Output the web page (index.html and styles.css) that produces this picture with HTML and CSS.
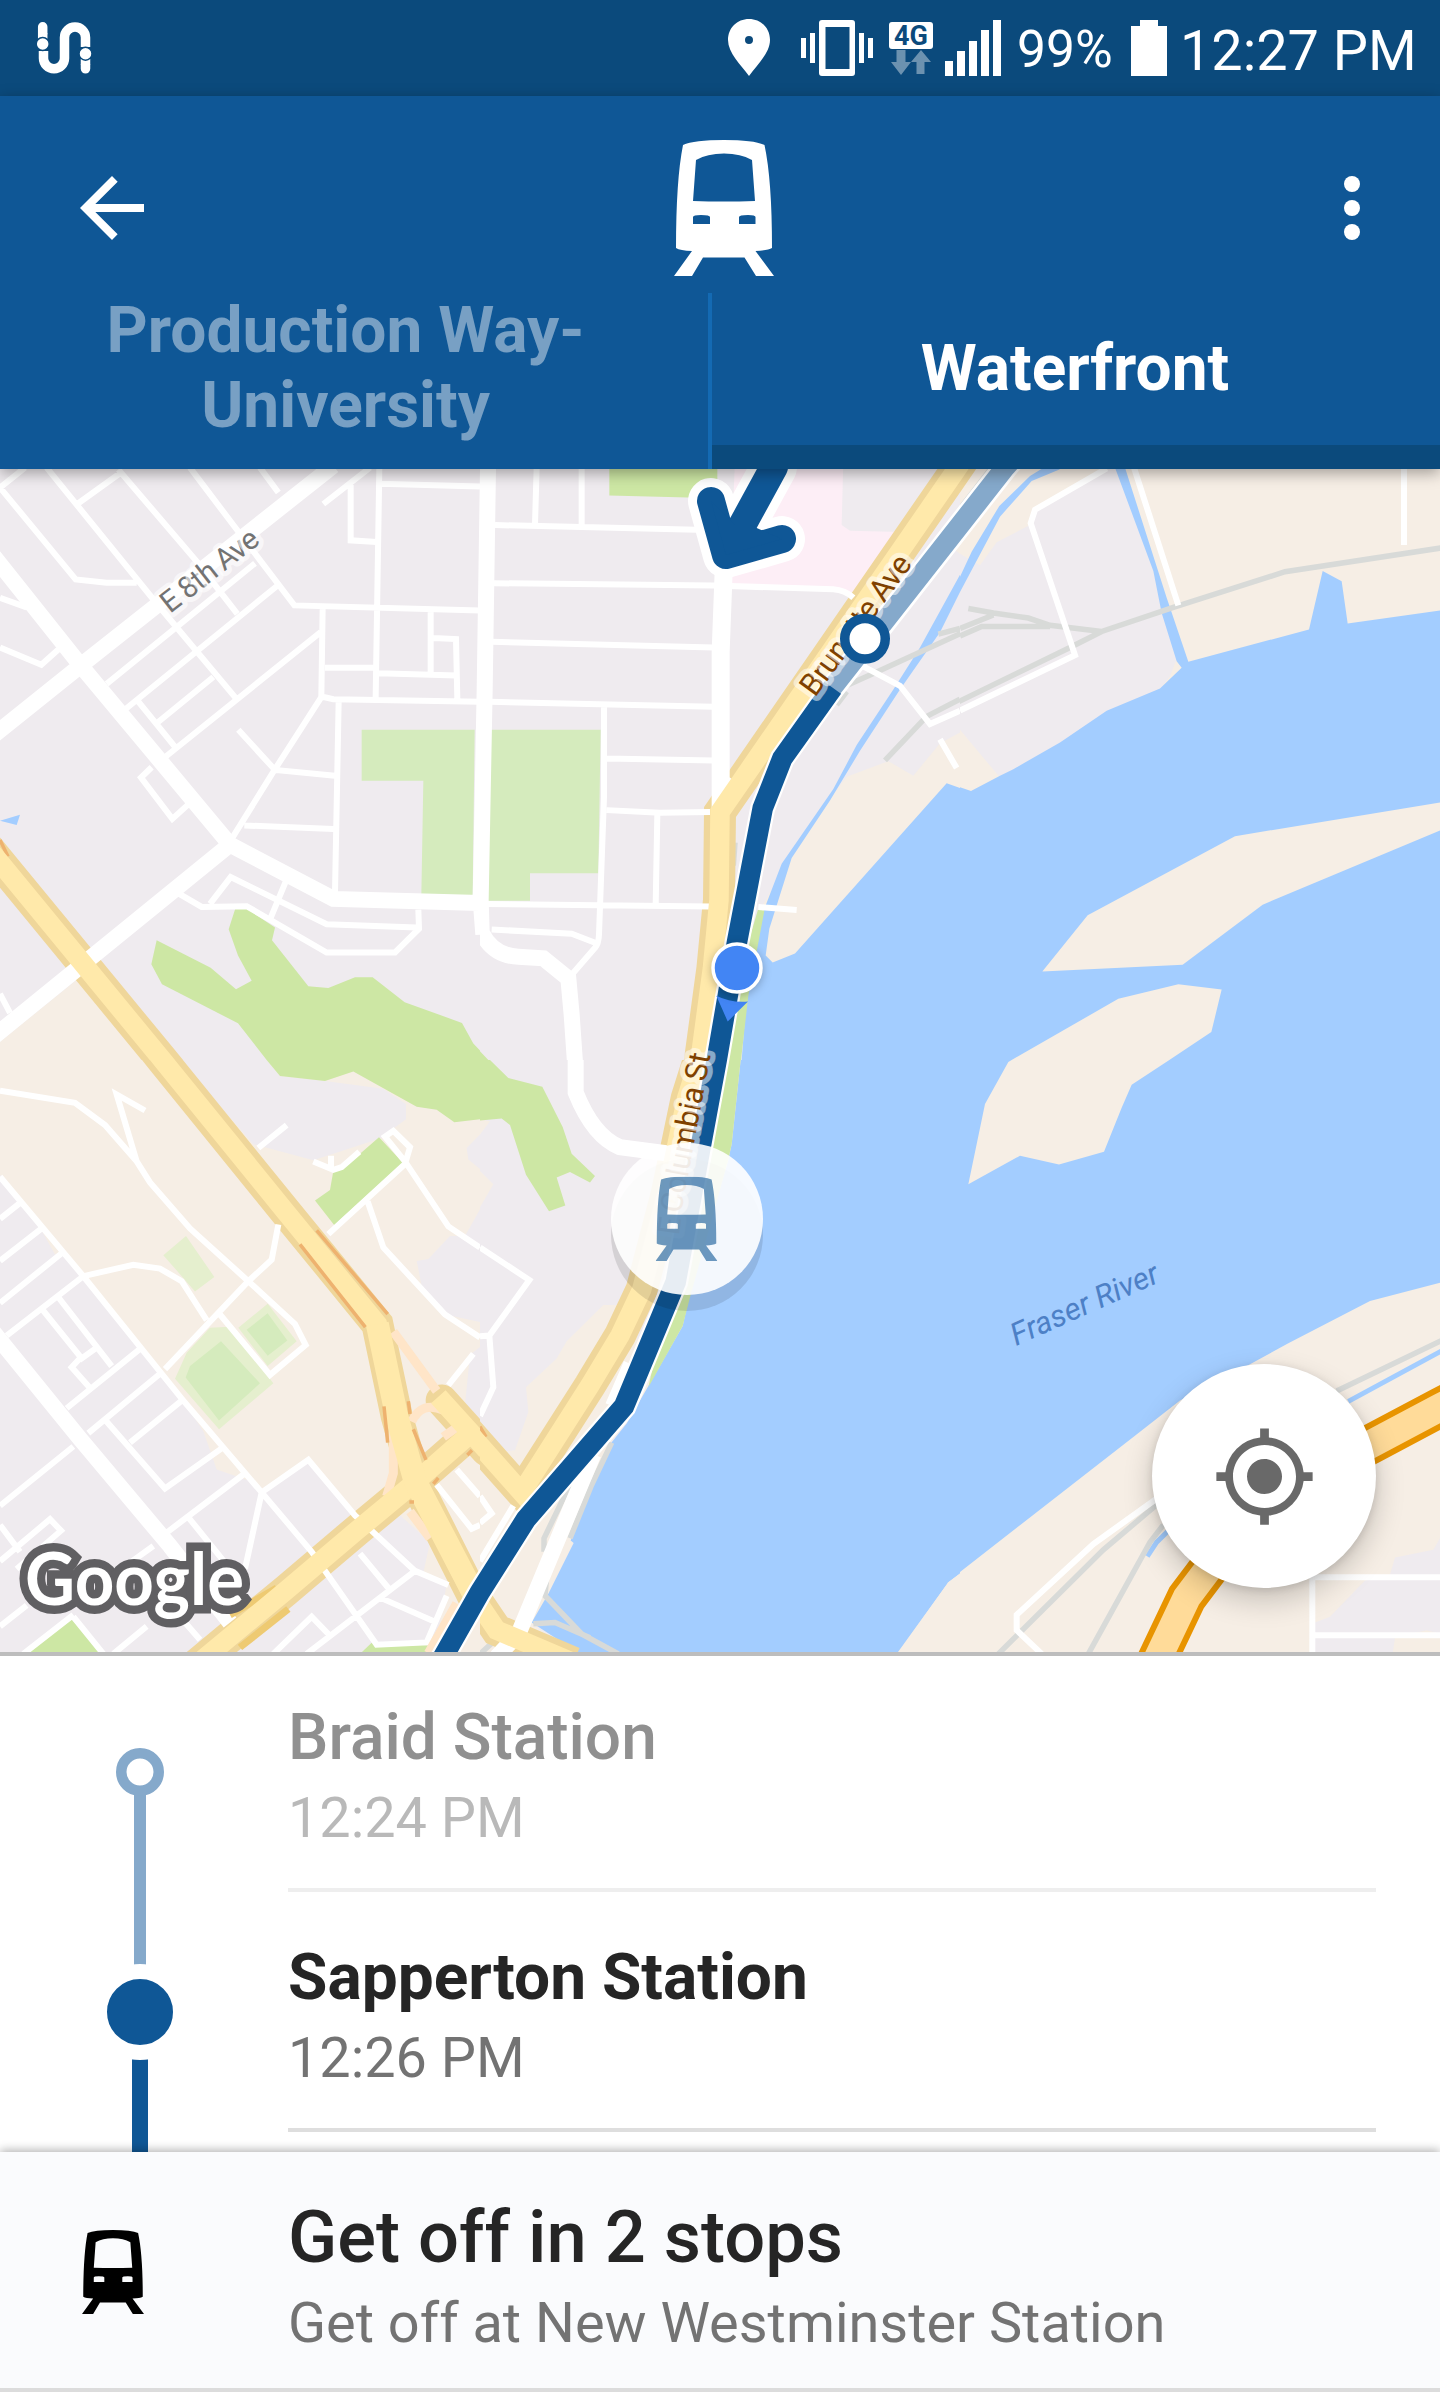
FILE: index.html
```html
<!DOCTYPE html>
<html lang="en">
<head>
<meta charset="utf-8">
<title>Waterfront trip</title>
<link rel="stylesheet" href="styles.css">
</head>
<body>
<svg class="defs" width="0" height="0" aria-hidden="true">
  <symbol id="train" viewBox="0 0 100 136" preserveAspectRatio="none">
    <path fill-rule="evenodd" d="M9 5Q20 0 50 0Q80 0 90.500 5Q98 40 98 108Q94 110.500 81.500 111L100 136H82L70.500 117.500H29L18 136H0L18 111Q6 110.500 2 108Q2 40 9 5ZM22 20Q33 13.500 50 13.500Q67 13.500 78 20L81 61Q50 62 19 61ZM19 77Q19 75 27 75Q36 75 36 77V84H19ZM65 77Q65 75 74 75Q81.500 75 81.500 77V84H65Z"/>
  </symbol>
</svg>

<div class="status-bar">
  <svg class="app-mark" width="56" height="54" viewBox="0 0 56 54">
    <g fill="none" stroke="#fff" stroke-width="9.500">
      <path stroke-linecap="round" d="M6.700 5.800V12M49.500 44V47.800"/>
      <path d="M6.700 12V18M7.500 30V37.200a10.500 10.500 0 0 0 21 0V16.500a10.500 10.500 0 0 1 21 0V26M49.500 38V44"/>
    </g>
    <circle cx="6.700" cy="23" r="6.500" fill="#fff" stroke="#0b4a7c" stroke-width="1.500"/>
    <circle cx="49.500" cy="32.700" r="6.500" fill="#fff" stroke="#0b4a7c" stroke-width="1.500"/>
  </svg>
  <div class="status-icons">
    <svg class="pin" width="42" height="57" viewBox="0 0 42 57"><path fill="#fff" fill-rule="evenodd" d="M21 0C9 0 0 9 0 21c0 13 13 25 21 36c8-11 21-23 21-36C42 9 33 0 21 0zM21 17a4 4 0 1 1 0 8a4 4 0 0 1 0-8z"/></svg>
    <svg class="vibrate" width="72" height="56" viewBox="0 0 72 56" fill="#fff"><path fill-rule="evenodd" d="M21 0H51Q54 0 54 3V53Q54 56 51 56H21Q18 56 18 53V3Q18 0 21 0ZM24.500 7V49H48.500V7Z"/><path d="M0 18h5v20H0zM9 13h5v30H9zM58 13h5v30h-5zM67 18h5v20h-5z"/></svg>
    <div class="network">
      <span class="network-type">4G</span>
      <svg width="40" height="25" viewBox="0 0 40 25" fill="#6c92b0"><path d="M5.500 0h9v12h5.500L10 25L0 12h5.500zM25.500 24h8V12h6.500L30 0L20 12h5.500z"/></svg>
    </div>
    <svg class="signal" width="56" height="56" viewBox="0 0 56 56" fill="#fff"><path d="M0 41h8v15H0zM12 31h8v25h-8zM24 21h8v35h-8zM36 10h8v46h-8zM48 0h8v56h-8z"/></svg>
    <span class="battery-level">99%</span>
    <svg class="battery" width="36" height="56" viewBox="0 0 36 56" fill="#fff"><path d="M9 0h18v6h9v50H0V6h9z"/></svg>
    <span class="clock">12:27 PM</span>
  </div>
</div>

<header class="header">
  <div class="toolbar">
    <svg width="96" height="96" viewBox="0 0 24 24" fill="#fff"><path d="M20 11H7.830l5.590-5.590L12 4l-8 8 8 8 1.410-1.410L7.830 13H20v-2z"/></svg>
    <svg class="toolbar-train" width="100" height="136" fill="#fff"><use href="#train"/></svg>
    <svg width="96" height="96" viewBox="0 0 24 24" fill="#fff"><circle cx="12" cy="6" r="2"/><circle cx="12" cy="12" r="2"/><circle cx="12" cy="18" r="2"/></svg>
  </div>
  <nav class="tabs">
    <div class="tab">Production Way-<br>University</div>
    <div class="tab tab-active">Waterfront</div>
  </nav>
</header>

<main class="map">
<svg class="map-canvas" width="1440" height="1183" viewBox="0 469 1440 1183">
  <!-- north-west tile -->
  <svg x="0" y="460" width="480" height="600" viewBox="0 0 1440 1568" preserveAspectRatio="none">
    <rect class="land" width="1440" height="1568"/>
    <path class="sand" d="M0 1520L235 1355L440 1568H0Z"/>
    <path class="park" d="M470 1255L632 1327L708 1383L755 1361L714 1295L686 1226L706 1172H740L825 1222L816 1255L925 1375L985 1380L1065 1352H1118L1214 1417L1386 1471L1420 1525L1440 1543V1568H800L714 1472L486 1370L454 1318Z"/>
    <path class="lawn" d="M1085 705H1424L1418 1137H1264L1270 838H1085Z"/>
    <path class="water" d="M0 943L60 927L50 954Z"/>
    <path class="casing" d="M-57 992L487 1568L540 1624"/>
    <path class="amber" d="M0 993L24 1036"/>
    <path class="minor" d="M0 72L75 20M0 72L227 312L320 321H410M140 20L470 375L710 625M235 113L358 36M355 25L590 265L712 402M570 20L700 170L883 380L1440 393M780 20L835 85M970 115L1110 20M1052 55V210L1130 214M1138 20L1127 620M1140 62L1440 69M968 385L964 620M964 618L1000 625L1440 632M975 543H1120M1135 557L1370 563M1292 395V555M1300 465L1368 468L1372 625M320 585L765 270M375 652L830 330M470 688L640 567M412 628L525 750M490 780L962 450M964 620L825 808L695 990M715 705L825 810L1005 825M1016 630L1005 1130M733 955L1000 964M455 803L423 830L517 938L565 900M0 360L80 385M0 490L124 535L175 495M530 1130L605 1168L740 1166L980 1287H1185L1257 1225L1255 1175M630 1160L692 1090L980 1213L1250 1222M858 1100L808 1205M0 1395L30 1445"/>
    <path class="major" d="M-30 727L245 535L1000 15M-20 250L245 540L690 1005L1000 1147L1440 1158M690 1005L-30 1515M1464 20L1454 600L1442 1150L1450 1240"/>
    <path class="arterial" d="M-57 992L487 1568L540 1624"/>
  </svg>
  <!-- north tile -->
  <svg x="480" y="460" width="480" height="600" viewBox="0 0 1440 1568" preserveAspectRatio="none">
    <rect class="land" width="1440" height="1568"/>
    <path class="park" d="M388 0H712V100L388 93ZM0 1545L25 1568H0Z"/>
    <path class="hospital" d="M765 0H1090L1085 170L1110 185L1265 188L1130 350L750 322Z"/>
    <path class="sand" d="M1440 860V712L1380 740L1300 825L1225 787L1100 828L1000 940L850 1160V1330H960ZM1440 180L1425 235L1440 245Z"/>
    <path class="water" d="M1440 857L1400 845L945 1290L878 1313L857 1295L868 1225L935 1040L1050 890L1140 760L1260 600L1380 450L1440 345V300L1320 490L1240 600L1130 745L1060 860L905 1055L850 1180L800 1400L785 1568H1440Z"/>
    <path class="park" d="M835 1172L853 1178L805 1400L783 1568H700Z"/>
    <path class="lawn" d="M32 705H362L355 1080H150V1152H22Z"/>
    <path class="rail" d="M1445 452L1200 550L1060 605M1375 455L1440 440M1215 785L1340 670L1440 625M1100 605L1070 640M1450 135L1280 350M765 1000L760 1060"/>
    <path class="casing" d="M1500 -65L1433 20L815 800L720 920L717 1150L697 1330L660 1568L650 1630"/>
    <path class="minor" d="M45 170L650 182M170 20L165 168M305 20V168M40 322L700 328L1060 338Q1095 340 1120 360M35 475L700 490M30 632L700 645M372 645V880L357 1240Q356 1265 345 1275L275 1345M380 780L700 785M380 915L540 922L690 920M532 925L527 1165M20 1160L690 1167M35 1227L275 1238L355 1265M835 1168L950 1176M1140 535L1260 590L1350 690L1440 655M1380 730L1430 805"/>
    <path class="major" d="M24 20L14 600L2 1150L5 1235Q40 1296 115 1298L190 1302L265 1355L275 1450L287 1600"/>
    <path class="major wide" d="M731 290L722 500V890L765 840"/>
    <path class="arterial" d="M1500 -65L1433 20L815 800L720 920L717 1150L697 1330L660 1568L650 1630"/>
  </svg>
  <!-- north-east tile -->
  <svg x="960" y="460" width="480" height="600" viewBox="0 0 1440 1568" preserveAspectRatio="none">
    <rect class="sand" width="1440" height="1568"/>
    <path class="land" d="M0 245L60 275L110 215L205 172L225 130L440 20H470L580 290L605 390L650 520L630 565L600 600L450 655L300 745L120 830L0 705Z"/>
    <path class="water" d="M0 855L33 865L120 825L160 808L300 738L440 655L600 597L665 543L650 526L605 400L580 290L465 20L495 20L620 360L685 527L1047 443L1088 290L1145 317L1163 427L1440 393V1568H0Z"/>
    <path class="sand" d="M247 1337L383 1190L825 983L1440 895V968L908 1162L668 1319ZM155 1568L475 1408L655 1370L785 1384L754 1495L628 1568Z"/>
    <path class="water" d="M260 15L210 42L118 120L35 240L0 305V345L120 148L215 55L300 24Z"/>
    <path class="rail" d="M1450 229L975 292L640 385L425 448L330 490L-10 634M25 388L100 400L205 413L270 432L425 448M0 440L100 405M0 460L65 435H270M95 20L-20 150"/>
    <path class="minor" d="M440 22L225 130L212 165L345 510L0 655M522 20L655 380M1332 20V222"/>
    <path class="casing" d="M60 -65L-7 20L-100 138"/>
    <path class="arterial" d="M60 -65L-7 20L-100 138"/>
  </svg>
  <!-- south-west tile -->
  <svg x="0" y="1060" width="480" height="600" viewBox="0 0 1440 1568" preserveAspectRatio="none">
    <rect class="sand" width="1440" height="1568"/>
    <path class="land" d="M540 0H800L840 42L975 55L1150 75L1218 115V155L1140 205L940 262L760 220ZM0 300L250 565L545 885L610 970L650 1070L750 1100L785 1130L925 1045L1080 1200L1200 1190L1290 1260L1270 1340L1340 1370L1300 1568H0ZM1440 195L1400 230L1405 260L1440 285ZM1440 390L1395 460H1350L1285 520L1250 525L1265 590L1335 665L1440 685ZM1440 750L1410 770L1395 900L1440 960Z"/>
    <path class="sand" d="M120 438L165 508L185 500Z"/>
    <path class="park" d="M800 0L840 42L975 55L1060 30L1250 122L1310 130L1363 163L1440 155V0ZM945 367L990 340L1000 290L1025 287L1137 202L1208 268L1003 432ZM80 1552L212 1458L305 1552ZM1080 1552L1115 1523L1300 1530L1260 1568H1080Z"/>
    <path class="field" d="M490 510L558 460L643 567L585 605ZM715 700L803 637L890 735L803 800ZM525 833L560 765L630 700L690 697L820 845L657 965Z"/>
    <path class="lawn" d="M740 705L803 662L862 733L803 773ZM557 830L570 800L663 735L780 845L657 942Z"/>
    <path class="casing" d="M460 -30L487 0L860 400L1132 690L1190 930L1245 1100L1430 1420M590 1580L860 1385L1070 1230L1250 1100L1400 985"/>
    <path class="casing" stroke-linecap="round" d="M1325 890L1460 1020"/>
    <path class="minor" d="M0 80L225 112L315 170L410 265L450 320L570 440L745 578L885 690L917 745L810 823L660 665M435 132L350 90L410 265M0 305L250 565L545 885L785 1130L935 1285L1130 1528L1280 1522L1340 1400M785 1130L925 1045L1065 1190L1245 1335L1345 1372M1080 1290L1170 1385M785 1130L735 1330M0 415L65 370M0 525L125 440M0 635L185 505M20 720L250 565L400 535L480 545L545 578L620 680M495 808L745 578L815 522L835 430M175 620L335 800M125 650L245 780L285 755M245 775L215 803L268 855M200 910L420 755M265 975L480 820M315 940L495 1120L665 1015M390 1000L545 890M500 1235L735 1080M565 1195L690 1330M0 1165L220 1010M0 1215L60 1285M0 1310L150 1200L183 1230L50 1330M340 1552L440 1480M310 1552L220 1455M380 1320L460 1270M0 1480L80 1425M70 1552L220 1450M775 230L860 170M940 265L1000 287L1025 280L1078 240M993 250V285M985 455L1215 272L1230 228L1180 185L1155 200L1215 265L1345 435L1440 490M1103 370L1150 490L1335 665L1440 725M1420 768L1345 850M1370 1070L1440 1140M1310 1110L1415 1225L1440 1215M1245 1335L920 1552M1140 1405L1310 1470M820 1552L935 1455L985 1500M550 1465L600 1515"/>
    <path class="major" d="M-30 700L240 990L510 1270L690 1470"/>
    <path class="ramp" d="M1180 710L1310 865M1235 945Q1265 890 1330 915M1330 985L1370 960M1180 960V1080L1160 1140M1230 1180L1290 1250M1370 1420L1285 1550"/>
    <path class="gold" d="M690 1450L830 1380M720 1535L865 1435"/>
    <path class="arterial" d="M460 -30L487 0L860 400L1132 690L1190 930L1245 1100L1430 1420M590 1580L860 1385L1070 1230L1250 1100L1400 985M1315 880L1460 1020"/>
    <path class="arterial wide" d="M1132 690L1190 930L1245 1100L1430 1410"/>
    <path class="amber" d="M900 482L1096 698M950 445L1163 664M1152 905L1163 1000M1225 892L1230 925M1240 965L1278 1045M1300 1108L1315 1092M1402 1032L1416 1020M1228 1155H1242"/>
  </svg>
  <!-- south tile -->
  <svg x="480" y="1060" width="480" height="600" viewBox="0 0 1440 1568" preserveAspectRatio="none">
    <rect class="land" width="1440" height="1568"/>
    <path class="sand" d="M0 1568V1030L105 1020L145 920L138 855L230 780L260 735L370 640H440L520 860L390 1000L275 1250L280 1262L160 1475L300 1568ZM0 195L30 160L0 155ZM0 290L40 325L0 385Z"/>
    <path class="water" d="M782 0L755 220L745 260L630 610L608 695L500 860L440 950L390 1005L272 1256L281 1262L205 1395L155 1470L300 1552H1252L1405 1365L1440 1342V0Z"/>
    <path class="sand" d="M1250 1552L1405 1365L1440 1342V1568Z"/>
    <path class="park" d="M700 0H782L755 220L745 260L630 620L608 695L505 855L560 640ZM0 0H30L85 47L187 70L248 175L275 245L345 303L330 320L270 293L230 307L256 380L207 395L138 300L90 170L65 153L0 158Z"/>
    <path class="rail" d="M192 1285V1250L270 1110M395 1000L335 1110L270 1250M200 1350L195 1400L305 1500L415 1552M160 1473L225 1470L330 1510M0 1552L60 1505"/>
    <path class="casing" d="M-40 968L125 1130L330 850L420 720L485 600L560 350L620 100L660 -10M-20 1400L50 1490L280 1575"/>
    <path class="amber" d="M605 80L570 225M465 610L430 695M0 958L18 985"/>
    <path class="minor" d="M0 490L148 575L28 720L0 722M28 720L40 855L0 930M0 1140L35 1185L0 1210M385 900L440 790M0 1310L100 1165"/>
    <path class="major" d="M287 -10V85Q340 200 420 228L570 245M50 1560L115 1500L225 1270L340 1030"/>
    <path class="arterial" d="M-40 968L125 1130L330 850L420 720L485 600L560 350L620 100L660 -10M-20 1400L50 1490L280 1575"/>
  </svg>
  <!-- south-east tile -->
  <svg x="960" y="1060" width="480" height="600" viewBox="0 0 1440 1568" preserveAspectRatio="none">
    <rect class="sand" width="1440" height="1568"/>
    <path class="water" d="M0 0H1440V582L1230 630L985 740L870 795L660 890L520 985L0 1338Z"/>
    <path class="sand" d="M145 5L155 0H628L515 65L485 125L432 240L297 273L180 250L25 325L75 115Z"/>
    <path class="land" d="M1440 1250L1420 1280L1305 1300L1290 1345L1215 1360L1110 1455L1065 1470V1568H1295L1305 1510L1400 1490L1440 1500Z"/>
    <path class="stream" d="M1445 760L1165 892M625 1230L590 1260L562 1297"/>
    <path class="rail" d="M1445 733L1130 865M600 1155L430 1280L115 1552M610 1215L570 1260L385 1552"/>
    <path class="minor" d="M600 1140L400 1265L170 1450V1490L245 1552M1057 1552V1352H1440M1065 1503H1440"/>
    <path class="highway-casing" d="M1500 882L1440 908L1230 1005L950 1130L745 1330L680 1405L590 1570"/>
    <path class="highway" d="M1500 882L1440 908L1230 1005L950 1130L745 1330L680 1405L590 1570"/>
  </svg>

  <!-- travelled and remaining route -->
  <g class="route">
    <path class="route-edge" d="M1040 428L1005 467.700L832.700 687.700L782.300 758.500L762.700 808.200L737 942L716.700 1060L675.700 1282L624 1406.300L526 1519.200L480 1592L438 1666"/>
    <path class="route-past" d="M1040 428L1005 467.700L825 697"/>
    <path class="route-line" d="M832.700 687.700L782.300 758.500L762.700 808.200L737 942L716.700 1060L675.700 1282L624 1406.300L526 1519.200L480 1592L438 1666"/>
  </g>

  <g class="street-label">
    <text class="label-gray" transform="translate(170 614) rotate(-38)" textLength="116" font-size="30">E 8th Ave</text>
    <text class="label-brown" transform="translate(815 698) rotate(-53.800)" textLength="166" font-size="31">Brunette Ave</text>
    <text class="label-brown" transform="translate(681 1214) rotate(-79.500)" textLength="162" font-size="31">Columbia St</text>
    <text class="label-brown" transform="translate(679 1236) rotate(-82)" font-size="31">E</text>
    <text class="label-river" transform="translate(1016 1346) rotate(-24)" textLength="159" font-size="31">Fraser River</text>
  </g>

  <g class="heading">
    <path class="heading-edge" d="M774 467L726 555M711 501L726 555L782 539"/>
    <path class="heading-line" d="M774 467L726 555M711 501L726 555L782 539"/>
    <path class="heading-fill" d="M711 501L726 555L782 539L750 525L735 525Z"/>
  </g>

  <circle class="stop-ring" cx="865" cy="638.700" r="20.250"/>
  <path fill="#4285f4" d="M716.300 995.700Q731 1003 748 1001.500L727.700 1021.500Z"/>
  <circle class="me" cx="737" cy="968" r="24"/>

  <g>
    <circle cx="687" cy="1235" r="76" fill="#000" opacity=".11"/>
    <circle cx="687" cy="1219" r="76" fill="#fff" opacity=".9"/>
    <svg x="655.500" y="1176.500" width="62" height="84.500" class="vehicle"><use href="#train"/></svg>
  </g>

  <text class="google" x="25" y="1605" textLength="219" lengthAdjust="spacingAndGlyphs">Google</text>
</svg>
<button class="locate" aria-label="My location">
  <svg width="105" height="105" viewBox="0 0 24 24" fill="#696969"><path d="M12 8c-2.210 0-4 1.790-4 4s1.790 4 4 4 4-1.790 4-4-1.790-4-4-4zm8.940 3A8.994 8.994 0 0 0 13 3.060V1h-2v2.060A8.994 8.994 0 0 0 3.060 11H1v2h2.060A8.994 8.994 0 0 0 11 20.940V23h2v-2.060A8.994 8.994 0 0 0 20.940 13H23v-2h-2.060zM12 19.200c-3.980 0-7.200-3.220-7.200-7.200s3.220-7.200 7.200-7.200 7.200 3.220 7.200 7.200-3.220 7.200-7.200 7.200z"/></svg>
</button>
</main>

<section class="stops">
  <div class="stop stop-past">
    <svg class="rail-col" width="288" height="236"><path d="M140 130V236" stroke="#85a9cb" stroke-width="12"/><circle cx="140" cy="116" r="18.750" fill="#fff" stroke="#85a9cb" stroke-width="10.500"/></svg>
    <div class="stop-body"><div class="stop-name">Braid Station</div><div class="stop-time">12:24 PM</div></div>
  </div>
  <div class="stop stop-current">
    <svg class="rail-col" width="288" height="240"><path d="M140 0V80" stroke="#85a9cb" stroke-width="12"/><path d="M140 160V240" stroke="#0f5796" stroke-width="16"/><circle cx="140" cy="120" r="40.500" fill="#0f5796" stroke="#fff" stroke-width="15"/></svg>
    <div class="stop-body"><div class="stop-name">Sapperton Station</div><div class="stop-time">12:26 PM</div></div>
  </div>
  <div class="stop stop-next">
    <svg class="rail-col" width="288" height="20"><path d="M140 0V20" stroke="#0f5796" stroke-width="16"/></svg>
  </div>
</section>

<footer class="notice">
  <div class="notice-icon"><svg width="62" height="84"><use href="#train"/></svg></div>
  <div class="notice-text">
    <div class="notice-title">Get off in 2 stops</div>
    <div class="notice-sub">Get off at New Westminster Station</div>
  </div>
</footer>
</body>
</html>
```
FILE: styles.css
```css
* { box-sizing: border-box; }
body {
  margin: 0;
  width: 1440px;
  height: 2392px;
  display: flex;
  flex-direction: column;
  overflow: hidden;
  background: #fff;
  font-family: Roboto, "Liberation Sans", sans-serif;
}
svg { display: block; flex: none; }
.defs { position: absolute; }

.status-bar {
  height: 96px;
  flex: none;
  display: flex;
  justify-content: space-between;
  padding: 0 26px 0 36px;
  background: #0b4a7c;
  color: #fff;
}
.app-mark { margin-top: 21px; }
.status-icons { display: flex; align-items: flex-start; }
.pin { margin: 19px 31px 0 0; }
.vibrate { margin: 20px 16px 0 0; }
.network { width: 44px; margin: 22px 12px 0 0; }
.network-type {
  display: block;
  height: 27px;
  border-radius: 3px;
  background: #fff;
  color: #0b4a7c;
  font-size: 27px;
  font-weight: 700;
  line-height: 28px;
  text-align: center;
}
.network svg { margin: 1px 0 0 2px; }
.signal { margin: 20px 16px 0 0; }
.battery-level { width: 96px; margin-right: 18px; font-size: 51.5px; line-height: 60px; padding-top: 20px; }
.battery { margin-top: 20px; }
.clock { width: 247px; padding: 19px 0 0 13px; font-size: 55.8px; line-height: 64px; white-space: nowrap; }

.header {
  position: relative;
  z-index: 2;
  height: 373px;
  flex: none;
  background: #0f5796;
  box-shadow: 0 4px 14px rgba(0, 0, 0, .35);
}
.toolbar {
  display: flex;
  align-items: center;
  justify-content: space-between;
  padding: 44px 40px 17px 64px;
}
.toolbar-train { margin-right: 16px; }
.tabs { display: flex; height: 176px; font-size: 64px; font-weight: 700; line-height: 75px; text-align: center; }
.tab {
  width: 712px;
  padding-right: 17px;
  border-right: 4px solid #146ab3;
  color: #78a0c4;
}
.tab-active {
  width: 728px;
  padding: 38px 2px 0 0;
  border-right: 0;
  border-bottom: 24px solid #0b4a7c;
  color: #fff;
}

.map { position: relative; height: 1187px; flex: none; border-bottom: 4px solid #bdbdbd; }
.land { fill: #efebef; }
.sand { fill: #f6eee5; }
.water { fill: #a3cdff; }
.park { fill: #cde7a4; }
.lawn { fill: #d5ebbd; }
.field { fill: #e5efce; }
.hospital { fill: #fdeef6; }
.casing, .arterial, .minor, .major, .rail, .amber, .gold, .ramp, .stream, .highway, .highway-casing {
  fill: none;
  vector-effect: non-scaling-stroke;
}
.minor { stroke: #fff; stroke-width: 6px; }
.major { stroke: #fff; stroke-width: 16px; }
.major.wide { stroke-width: 18px; }
.rail { stroke: #d8dad8; stroke-width: 5.5px; }
.stream { stroke: #a3cdff; stroke-width: 5px; }
.casing { stroke: #efd69a; stroke-width: 32px; }
.arterial { stroke: #ffe9aa; stroke-width: 19.5px; }
.arterial.wide { stroke-width: 23px; }
.amber { stroke: #eeb26f; stroke-width: 3.5px; }
.gold { stroke: #eeca72; stroke-width: 7px; }
.ramp { stroke: #ffe5c8; stroke-width: 9px; }
.highway-casing { stroke: #e89400; stroke-width: 40px; }
.highway { stroke: #ffdb99; stroke-width: 28px; }
.route path { fill: none; }
.route-edge { stroke: #fff; stroke-width: 25px; }
.route-past { stroke: #85a9cb; stroke-width: 20px; }
.route-line { stroke: #0f5796; stroke-width: 20.5px; }
.heading path { fill: none; stroke-linecap: round; stroke-linejoin: round; }
.heading-edge { stroke: #fff; stroke-width: 46px; }
.heading-line { stroke: #0f5796; stroke-width: 28px; }
.heading .heading-fill { fill: #0f5796; }
.street-label text { paint-order: stroke; stroke-linejoin: round; stroke-width: 10px; }
.label-gray { fill: #737373; stroke: rgba(255, 255, 255, .6); }
.label-brown { fill: #7f4100; stroke: rgba(255, 255, 255, .5); }
.street-label .label-river { fill: #4d80c6; stroke: none; font-style: italic; }
.stop-ring { fill: #fff; stroke: #0f5796; stroke-width: 9.5px; }
.me { fill: #4285f4; stroke: #fff; stroke-width: 3.5px; filter: drop-shadow(0 2px 4px rgba(0, 0, 0, .25)); }
.vehicle { fill: #0f5796; opacity: .6; }
.google {
  font: 700 72px Lato, sans-serif;
  fill: #fff;
  stroke: #605f62;
  stroke-width: 17px;
  paint-order: stroke;
}
.locate {
  position: absolute;
  right: 64px;
  bottom: 64px;
  width: 224px;
  height: 224px;
  display: flex;
  align-items: center;
  justify-content: center;
  padding: 0;
  border: 0;
  border-radius: 50%;
  background: #fff;
  box-shadow: 0 12px 30px rgba(0, 0, 0, .2), 0 2px 8px rgba(0, 0, 0, .12);
}

.stops { height: 496px; flex: none; overflow: hidden; }
.stop { display: flex; height: 240px; }
.stop-body { width: 1088px; padding-top: 48px; border-bottom: 4px solid #dedede; }
.stop-name { font-size: 64px; line-height: 75px; font-weight: 500; color: #252525; }
.stop-time { margin-top: 10px; font-size: 55.8px; line-height: 66px; color: #737373; }
.stop-past { height: 236px; }
.stop-past .stop-body { padding-top: 44px; border-color: #eee; }
.stop-past .stop-name { color: #909090; }
.stop-past .stop-time { color: #b9b9b9; }
.stop-current .stop-name { font-weight: 700; }
.stop-next { height: 20px; }

.notice {
  position: relative;
  height: 240px;
  flex: none;
  display: flex;
  background: #fafbfd;
  border-bottom: 4px solid #dcdcdc;
  box-shadow: 0 -2px 9px rgba(0, 0, 0, .3);
}
.notice-icon { width: 288px; padding: 78px 0 0 82px; }
.notice-text { padding-top: 44px; white-space: nowrap; }
.notice-title { font-size: 72.3px; line-height: 84px; font-weight: 500; color: #252525; }
.notice-sub { margin-top: 10px; font-size: 55.9px; line-height: 66px; color: #737373; }
```
